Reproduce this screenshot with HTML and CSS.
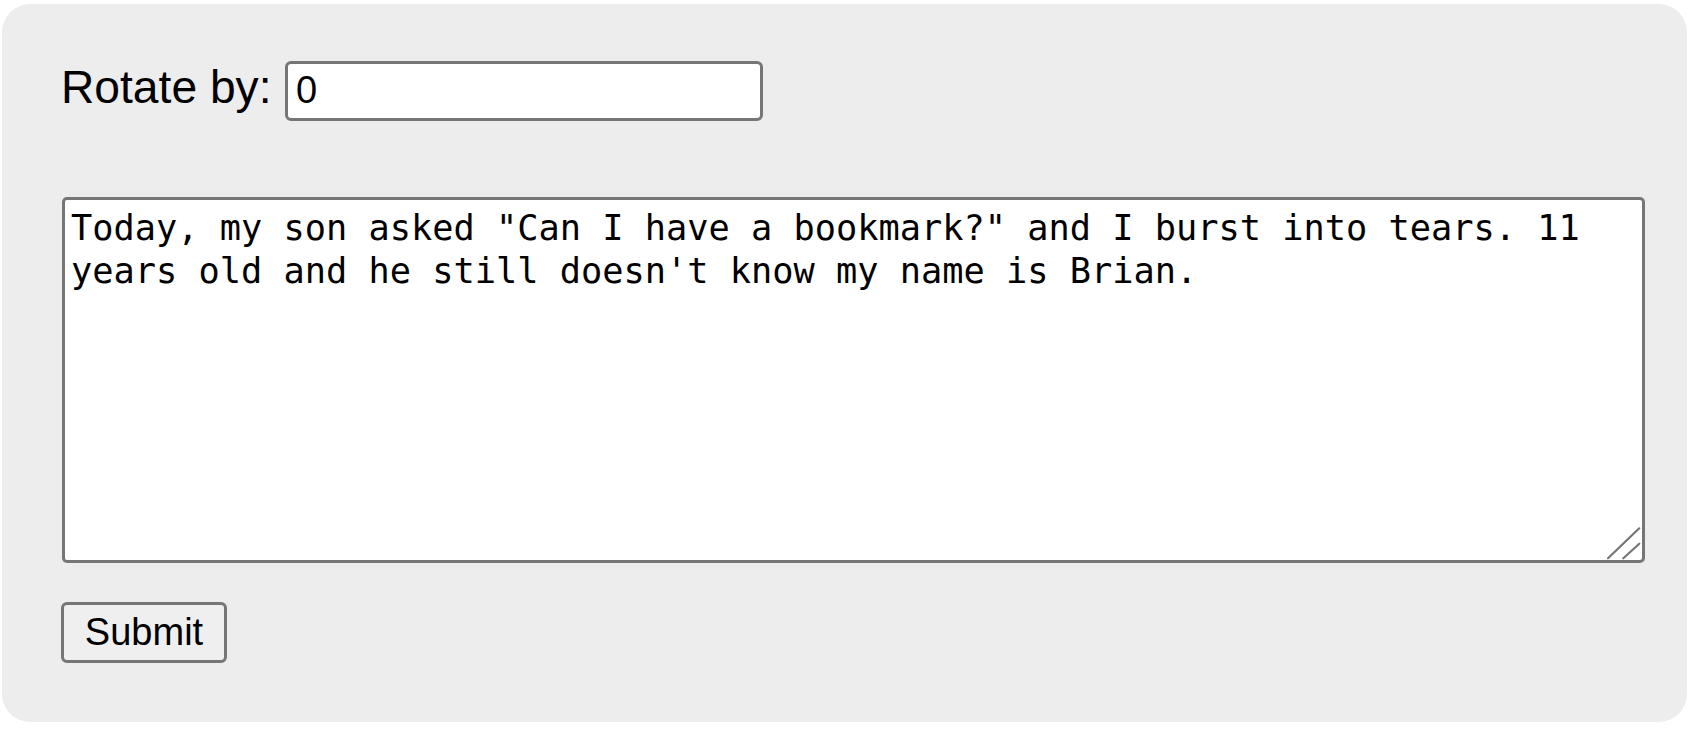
FILE: index.html
```html
<!DOCTYPE html>
<html lang="en">
<head>
<meta charset="utf-8">
<title>Rotate</title>
<link rel="stylesheet" href="styles.css">
</head>
<body>
<form class="panel">
  <div class="row">
    <label class="label" for="rot">Rotate by:</label>
    <input class="num" id="rot" type="text" value="0">
  </div>
  <div class="field">
    <textarea class="text">Today, my son asked "Can I have a bookmark?" and I burst into tears. 11 years old and he still doesn't know my name is Brian.</textarea>
    <svg class="grip" width="40" height="40" viewBox="0 0 40 40" aria-hidden="true">
      <line x1="3" y1="35.3" x2="34.3" y2="5.3" stroke="#767676" stroke-width="2.2" stroke-linecap="round"/>
      <line x1="18.3" y1="35.3" x2="34.3" y2="20.7" stroke="#767676" stroke-width="2.2" stroke-linecap="round"/>
    </svg>
  </div>
  <button class="submit" type="button">Submit</button>
</form>
</body>
</html>
```
FILE: styles.css
```css
html, body {
  margin: 0;
  padding: 0;
  background: #ffffff;
}

.panel {
  box-sizing: border-box;
  width: 1685px;
  height: 718px;
  margin: 4px 0 0 2px;
  padding: 56px 0 0 59px;
  background: #ededed;
  border-radius: 28px;
  display: flex;
  flex-direction: column;
  align-items: flex-start;
}

.row {
  display: flex;
  align-items: baseline;
  height: 60px;
}

.label {
  font-family: "Liberation Sans", Arial, sans-serif;
  font-size: 46.2px;
  color: #000;
  margin-right: 13.5px;
}

.num {
  box-sizing: border-box;
  width: 478px;
  height: 60px;
  margin: 0;
  padding: 0 8px;
  border: 3px solid #767676;
  border-radius: 6px;
  background: #ffffff;
  font-family: "Liberation Sans", Arial, sans-serif;
  font-size: 38px;
  color: #000;
  outline: none;
}

.field {
  position: relative;
  margin: 77px 0 0 1px;
}

.text {
  box-sizing: border-box;
  display: block;
  width: 1583px;
  height: 366px;
  margin: 0;
  padding: 5.5px 6px;
  border: 3px solid #767676;
  border-radius: 5px;
  background: #ffffff;
  font-family: "DejaVu Sans Mono", "Liberation Mono", monospace;
  font-size: 35.3px;
  line-height: 43.5px;
  color: #000;
  outline: none;
  resize: none;
}

.grip {
  position: absolute;
  right: 0;
  bottom: 0;
  pointer-events: none;
}

.submit {
  box-sizing: border-box;
  width: 166px;
  height: 61px;
  margin: 39px 0 0 0;
  padding: 0;
  border: 3px solid #767676;
  border-radius: 6px;
  background: #efefef;
  font-family: "Liberation Sans", Arial, sans-serif;
  font-size: 38px;
  color: #000;
}
```
